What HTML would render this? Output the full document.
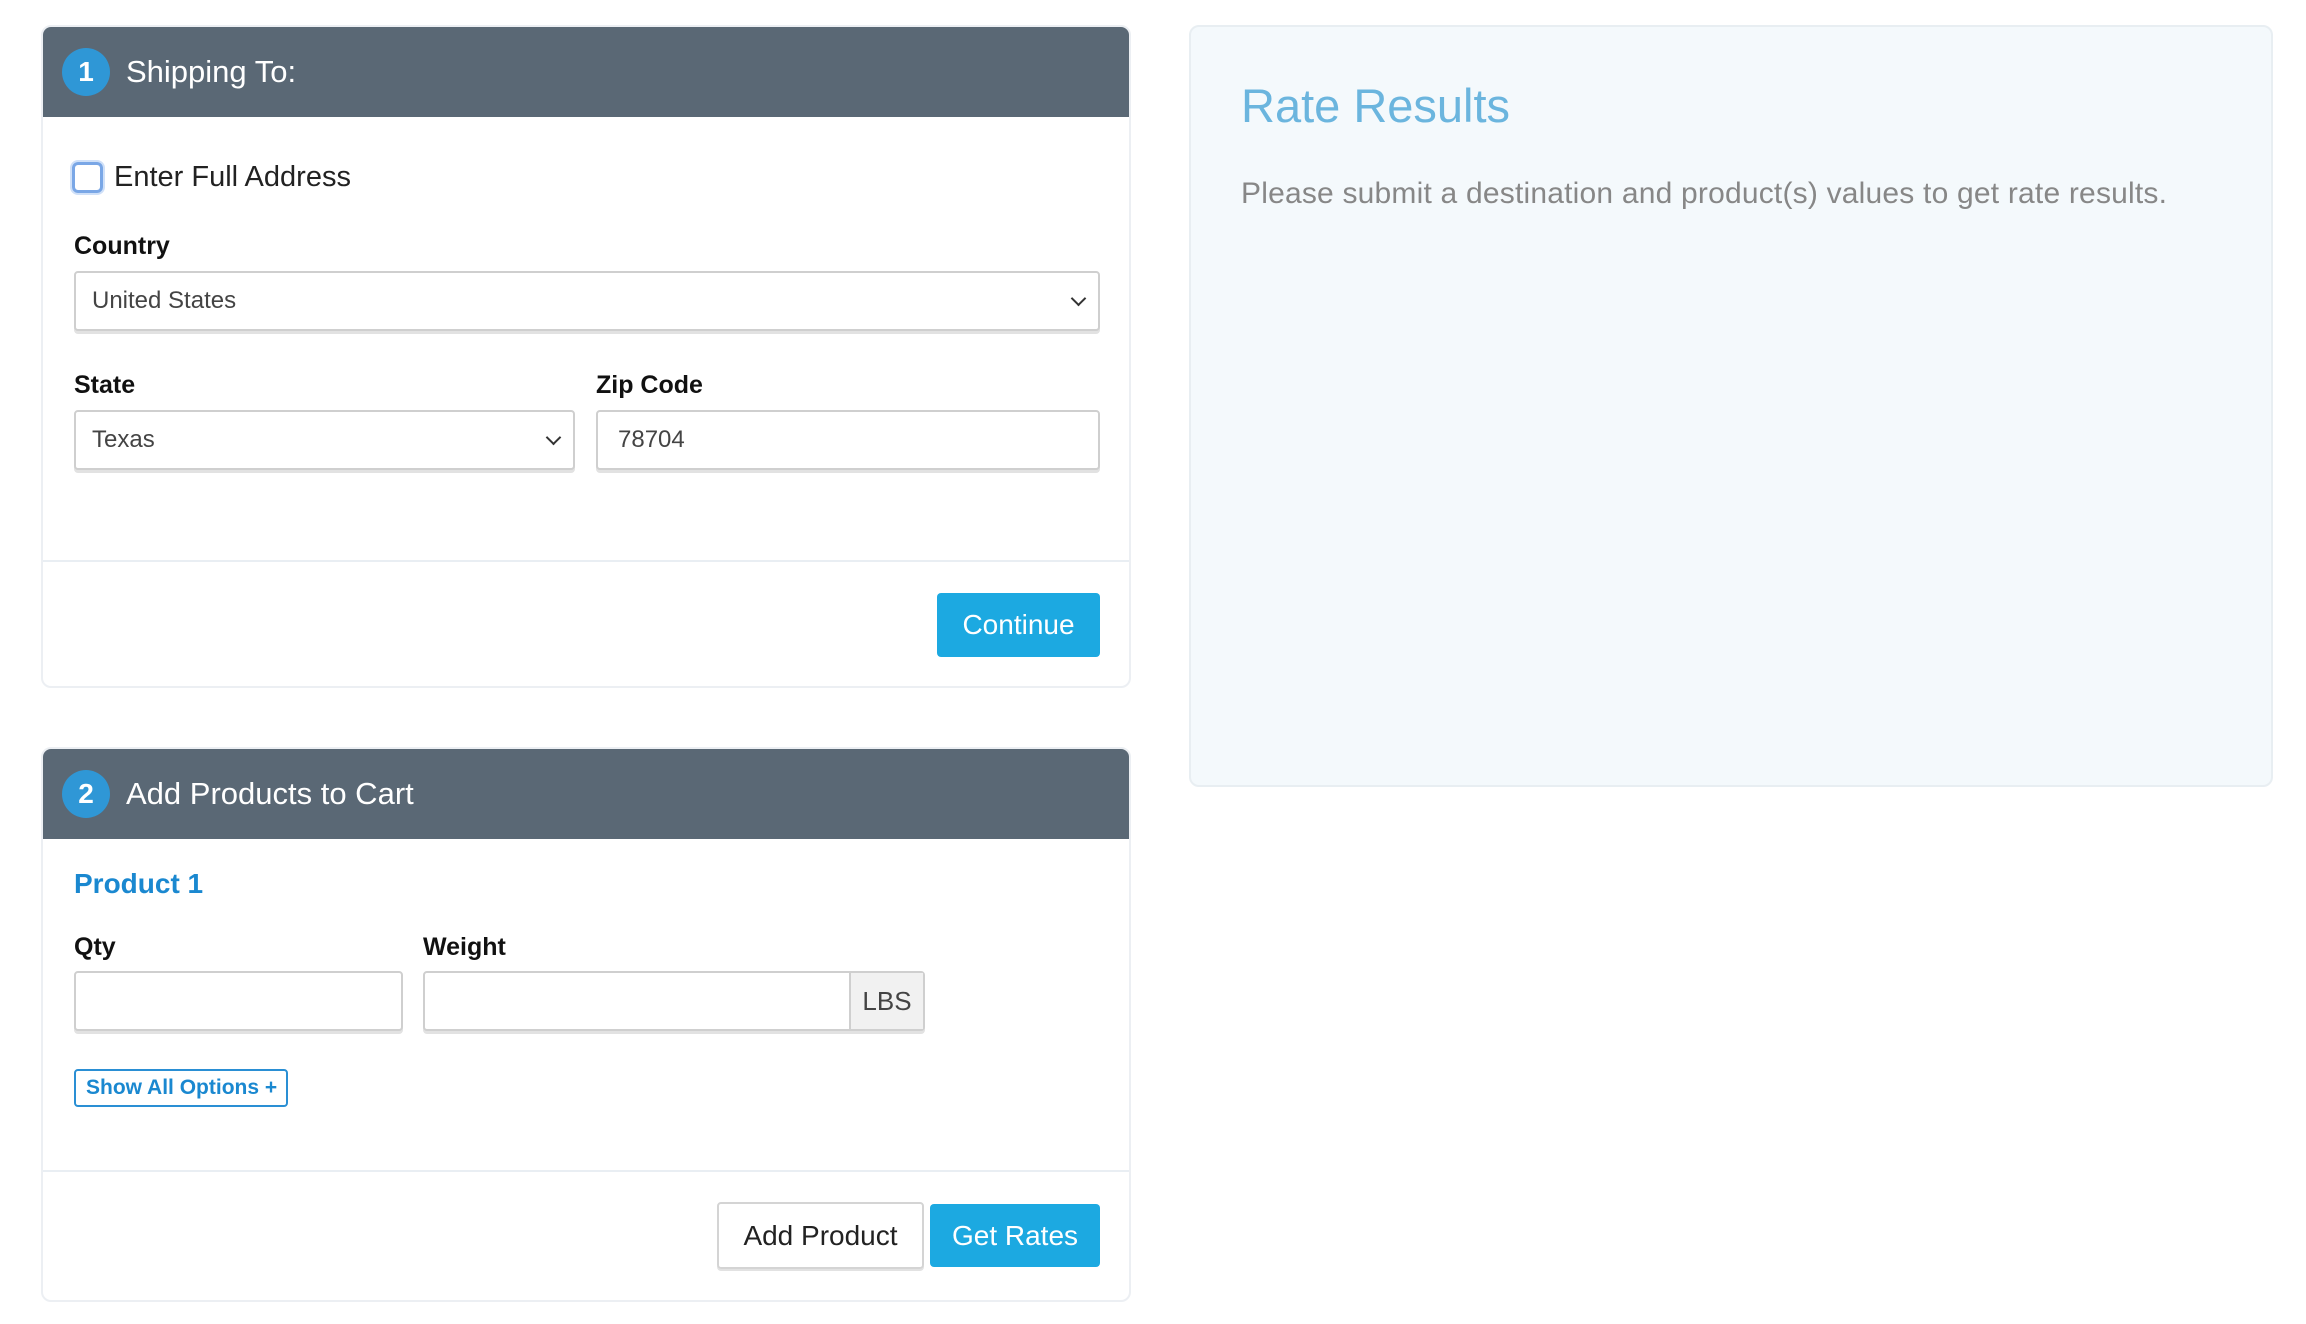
<!DOCTYPE html>
<html><head><meta charset="utf-8"><style>
*{box-sizing:border-box;margin:0;padding:0}
body{width:2306px;height:1324px;background:#fff;font-family:"Liberation Sans",Arial,sans-serif;position:relative;overflow:hidden;color:#111}
.abs{position:absolute}
.card{position:absolute;left:41px;width:1090px;border:2px solid #eceff3;border-radius:10px;background:#fff;overflow:hidden}
.hdr{position:absolute;left:0;top:0;right:0;height:90px;background:#5a6875}
.badge{position:absolute;left:19px;top:21px;width:48px;height:48px;border-radius:50%;background:#2f97d6;color:#fff;font-size:28px;font-weight:bold;text-align:center;line-height:48px}
.htitle{position:absolute;left:83px;top:0;line-height:90px;color:#fff;font-size:31px}
.lbl{position:absolute;font-weight:bold;font-size:25px;color:#111}
.inp{position:absolute;height:60px;border:2px solid #cfcfcf;border-radius:4px;background:#fff;box-shadow:0 3px 0 #e2e2e2;font-size:24px;color:#444;line-height:56px;padding-left:16px}
.chev{position:absolute;right:14px;top:20px;width:11px;height:11px;border-right:2.5px solid #333;border-bottom:2.5px solid #333;transform:rotate(45deg)}
.div{position:absolute;left:0;right:0;height:2px;background:#e9eef3}
.btn{position:absolute;background:#1ca9e1;color:#fff;font-size:28px;text-align:center;border-radius:4px}
</style></head><body>

<div class="card" style="top:25px;height:663px">
  <div class="hdr"><div class="badge">1</div><div class="htitle">Shipping To:</div></div>
  <div class="abs" style="left:29px;top:135px;width:31px;height:31px;border:3px solid #7aa7e6;border-radius:6px;box-shadow:0 0 0 2px #cfe0f8"></div>
  <div class="abs" style="left:71px;top:134px;font-size:29px;color:#222">Enter Full Address</div>
  <div class="lbl" style="left:31px;top:205px">Country</div>
  <div class="inp" style="left:31px;top:244px;width:1026px">United States<div class="chev"></div></div>
  <div class="lbl" style="left:31px;top:344px">State</div>
  <div class="inp" style="left:31px;top:383px;width:501px">Texas<div class="chev"></div></div>
  <div class="lbl" style="left:553px;top:344px">Zip Code</div>
  <div class="inp" style="left:553px;top:383px;width:504px;padding-left:20px">78704</div>
  <div class="div" style="top:533px"></div>
  <div class="btn" style="left:894px;top:566px;width:163px;height:64px;line-height:64px">Continue</div>
</div>

<div class="card" style="top:747px;height:555px">
  <div class="hdr"><div class="badge">2</div><div class="htitle">Add Products to Cart</div></div>
  <div class="abs" style="left:31px;top:119px;font-size:28px;font-weight:bold;color:#1a88d0">Product 1</div>
  <div class="lbl" style="left:31px;top:184px">Qty</div>
  <div class="inp" style="left:31px;top:222px;width:329px"></div>
  <div class="lbl" style="left:380px;top:184px">Weight</div>
  <div class="inp" style="left:380px;top:222px;width:502px;padding:0">
    <div class="abs" style="right:0;top:0;width:74px;height:56px;background:#f1f1f1;border-left:2px solid #cfcfcf;text-align:center;color:#444;font-size:26px">LBS</div>
  </div>
  <div class="abs" style="left:31px;top:320px;width:214px;height:38px;border:2px solid #2a8fd4;border-radius:4px;color:#1a88d0;font-size:21px;font-weight:bold;line-height:34px;padding-left:10px">Show All Options +</div>
  <div class="div" style="top:421px"></div>
  <div class="abs" style="left:674px;top:453px;width:207px;height:67px;border:2px solid #d4d4d4;border-radius:4px;box-shadow:0 2px 0 #e2e2e2;font-size:28px;color:#222;text-align:center;line-height:63px">Add Product</div>
  <div class="btn" style="left:887px;top:455px;width:170px;height:63px;line-height:63px">Get Rates</div>
</div>

<div class="abs" style="left:1189px;top:25px;width:1084px;height:762px;background:#f4f9fc;border:2px solid #e8eef2;border-radius:10px">
  <div class="abs" style="left:50px;top:51px;font-size:47px;color:#6bb5de">Rate Results</div>
  <div class="abs" style="left:50px;top:150px;font-size:30px;letter-spacing:0.2px;color:#878787">Please submit a destination and product(s) values to get rate results.</div>
</div>
</body></html>
